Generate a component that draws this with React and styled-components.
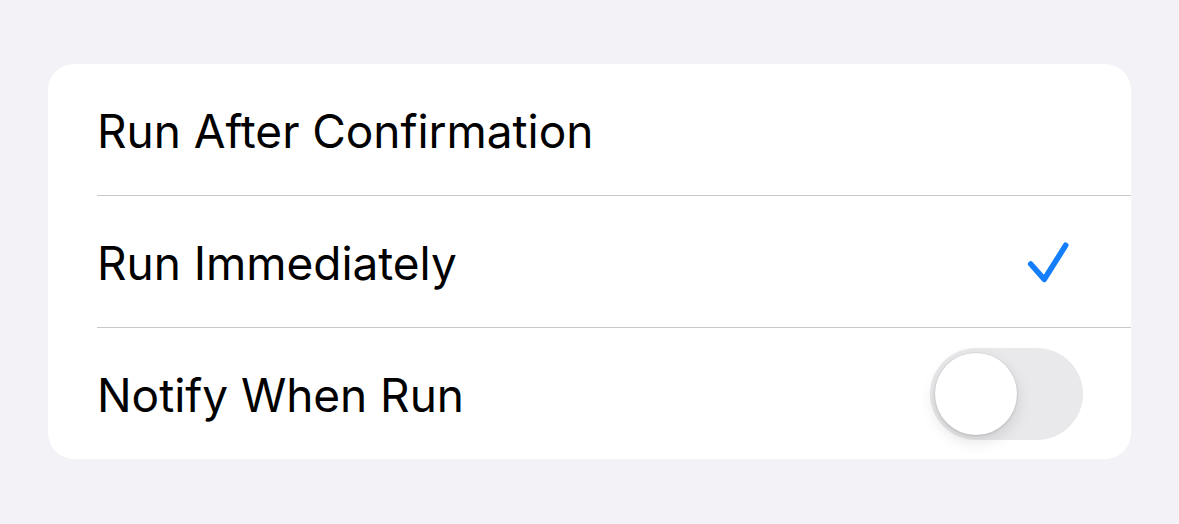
import React, { useState } from "react";
import styled, { createGlobalStyle } from "styled-components";

const GlobalStyle = createGlobalStyle`
  html, body {
    margin: 0;
    padding: 0;
    background: #f2f2f7;
  }
  body {
    font-family: Inter, "Liberation Sans", sans-serif;
    -webkit-font-smoothing: antialiased;
  }
`;

const Page = styled.div`
  width: 1179px;
  height: 524px;
  box-sizing: border-box;
  padding: 64px 48px;
  background: #f2f2f7;
`;

const Card = styled.div`
  background: #ffffff;
  border-radius: 26px;
  overflow: hidden;
`;

const Row = styled.div`
  padding-left: 49px;
`;

const RowInner = styled.div`
  height: 131px;
  display: flex;
  align-items: center;
  justify-content: space-between;
  padding-right: 48px;
  border-bottom: ${(p) => (p.$last ? "none" : "1px solid #c8c7cc")};
`;

const Label = styled.span`
  font-size: 46px;
  color: #000000;
  letter-spacing: -0.05px;
  padding-top: 2px;
`;

const Check = styled.svg`
  width: 48px;
  height: 48px;
  margin-right: 13px;
`;

const SwitchTrack = styled.button`
  width: 153px;
  height: 92px;
  border: none;
  padding: 0;
  border-radius: 46px;
  background: ${(p) => (p.$on ? "#34c759" : "#e9e9eb")};
  display: flex;
  align-items: center;
  justify-content: ${(p) => (p.$on ? "flex-end" : "flex-start")};
  padding: 0 5px;
  box-sizing: border-box;
  cursor: pointer;
`;

const Knob = styled.span`
  width: 82px;
  height: 82px;
  border-radius: 50%;
  background: #ffffff;
  box-shadow: 0 6px 16px rgba(0, 0, 0, 0.12), 0 1px 3px rgba(0, 0, 0, 0.1),
    0 0 0 1px rgba(0, 0, 0, 0.03);
`;

const CheckMark = () => (
  <Check viewBox="0 0 48 48">
    <path
      d="M8.7 26 L22.3 41.3 L43.7 7.3"
      fill="none"
      stroke="#147efb"
      strokeWidth="5.6"
      strokeLinecap="round"
      strokeLinejoin="round"
    />
  </Check>
);

export default function App() {
  const [notify, setNotify] = useState(false);
  return (
    <>
      <GlobalStyle />
      <Page>
        <Card>
          <Row>
            <RowInner>
              <Label>Run After Confirmation</Label>
            </RowInner>
          </Row>
          <Row>
            <RowInner>
              <Label>Run Immediately</Label>
              <CheckMark />
            </RowInner>
          </Row>
          <Row>
            <RowInner $last>
              <Label>Notify When Run</Label>
              <SwitchTrack $on={notify} onClick={() => setNotify(!notify)}>
                <Knob />
              </SwitchTrack>
            </RowInner>
          </Row>
        </Card>
      </Page>
    </>
  );
}
